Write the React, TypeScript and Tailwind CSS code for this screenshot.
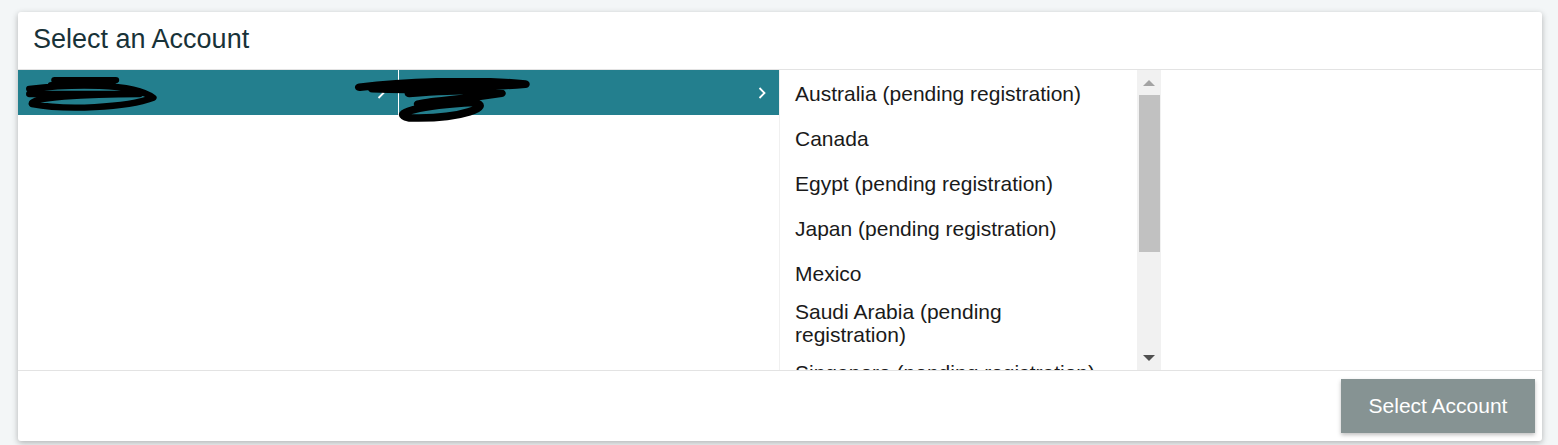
import React from 'react';

const COUNTRIES = [
  'Australia (pending registration)',
  'Canada',
  'Egypt (pending registration)',
  'Japan (pending registration)',
  'Mexico',
  'Saudi Arabia (pending registration)',
  'Singapore (pending registration)',
];

function Chevron() {
  return (
    <svg width="10" height="14" viewBox="0 0 10 14" className="shrink-0">
      <path d="M2.5 2 L7.5 7 L2.5 12" fill="none" stroke="#ffffff" strokeWidth="1.8" />
    </svg>
  );
}

// black marker strokes hiding account names
function Scribble({ d, className }: { d: string; className: string }) {
  return (
    <svg className={`absolute pointer-events-none ${className}`} viewBox="0 0 200 60" preserveAspectRatio="none">
      <path d={d} fill="none" stroke="#000" strokeWidth="10" strokeLinecap="round" strokeLinejoin="round" />
    </svg>
  );
}

function FakeScrollbar() {
  return (
    <div className="w-[24px] shrink-0 bg-[#f1f1f1] flex flex-col items-center">
      <div className="h-[25px] flex items-center justify-center">
        <div className="w-0 h-0 border-l-[6px] border-r-[6px] border-b-[6px] border-l-transparent border-r-transparent border-b-[#a3a3a3]" />
      </div>
      <div className="w-[21px] h-[157px] bg-[#c1c1c1]" />
      <div className="flex-1" />
      <div className="h-[25px] flex items-center justify-center">
        <div className="w-0 h-0 border-l-[6px] border-r-[6px] border-t-[6px] border-l-transparent border-r-transparent border-t-[#505050]" />
      </div>
    </div>
  );
}

export default function App() {
  return (
    <div className="w-[1558px] h-[445px] bg-[#f3f6f7] pt-[12px] pl-[18px] font-['Liberation_Sans',Arial,sans-serif]">
      <div className="w-[1524px] h-[429px] bg-white rounded-[3px] shadow-[0_2px_6px_rgba(0,0,0,0.28)] flex flex-col">
        <div className="h-[58px] border-b border-[#e3e3e3] flex items-center px-[15px]">
          <h2 className="text-[27px] text-[#183238] leading-none pb-[2px]">Select an Account</h2>
        </div>

        <div className="h-[300px] flex">
          <div className="w-[380px] relative">
            <div className="h-[45px] bg-[#237f8e] flex items-center justify-end pr-[12px]">
              <Chevron />
            </div>
            <Scribble
              className="left-[6px] top-[5px] w-[136px] h-[38px]"
              d="M45 8 L135 8 M8 22 C70 14 160 12 190 36 C150 52 60 56 12 46 C6 36 90 30 170 30 M8 30 L150 30 M40 16 L130 14"
            />
          </div>
          <div className="w-px bg-white" />
          <div className="w-[380px] relative">
            <div className="h-[45px] bg-[#237f8e] flex items-center justify-end pr-[12px]">
              <Chevron />
            </div>
            <Scribble
              className="left-[-45px] top-[8px] w-[184px] h-[46px]"
              d="M6 12 C60 4 140 2 186 8 C120 14 60 16 20 14 M60 20 C110 16 150 14 160 20 C120 28 80 30 70 34 M60 52 C40 46 70 36 130 32 C150 36 120 54 60 52"
            />
          </div>
          <div className="flex-1 flex border-l border-[#f0f0f0]">
            <div className="w-[357px] overflow-hidden">
              {COUNTRIES.map((c) => (
                <div key={c} className="min-h-[45px] pl-[15px] pr-[24px] py-[4px] flex items-center text-[21px] leading-[23px] text-[#1a1a1a] first:mt-px">
                  {c}
                </div>
              ))}
            </div>
            <FakeScrollbar />
            <div className="flex-1" />
          </div>
        </div>

        <div className="flex-1 border-t border-[#e3e3e3] flex items-start justify-end pt-[8px] pr-[7px]">
          <button className="w-[194px] h-[54px] bg-[#869393] text-white text-[21px] shadow-[0_2px_4px_rgba(0,0,0,0.25)]">
            Select Account
          </button>
        </div>
      </div>
    </div>
  );
}
